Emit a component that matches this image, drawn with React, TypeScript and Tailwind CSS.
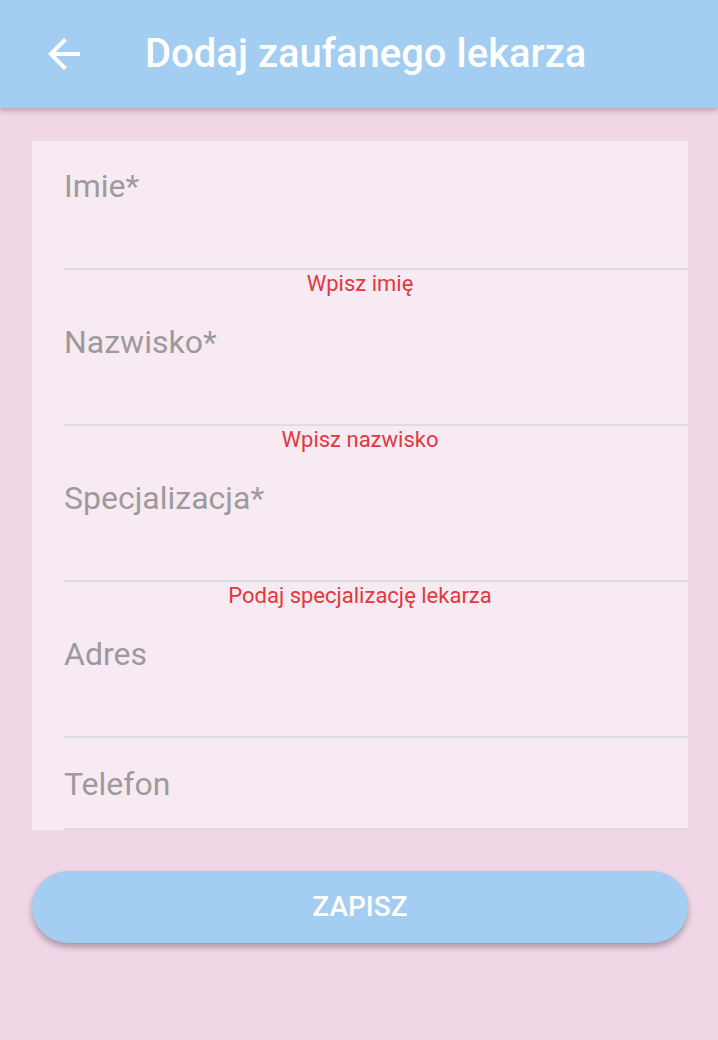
import React from "react";

const Field = ({ label, h, pt }: { label: string; h: string; pt: string }) => (
  <div className="pl-[32px]">
    <div className={`${h} ${pt} box-border border-b-2 border-[#dedcdd]`}>
      <div className="text-[32px] leading-[36px] text-[#9e9a9c]">{label}</div>
    </div>
  </div>
);

const ErrorRow = ({ text }: { text: string }) => (
  <div className="h-[28px] text-center text-[22px] leading-[28px] text-[#e0393e]">{text}</div>
);

export default function App() {
  return (
    <div
      className="w-[718px] h-[1040px] bg-[#f1d6e6] overflow-hidden"
      style={{ fontFamily: "Roboto, 'Noto Sans', sans-serif" }}
    >
      <div className="relative z-10 h-[108px] bg-[#a3cdf1] flex items-center shadow-[0_3px_5px_rgba(0,0,0,0.22)]">
        <div className="w-[48px] h-[48px] ml-[40px] flex items-center justify-center">
          <svg viewBox="0 0 24 24" width="48" height="48" fill="#ffffff">
            <path d="M20 11H7.83l5.59-5.59L12 4l-8 8 8 8 1.41-1.41L7.83 13H20v-2z" />
          </svg>
        </div>
        <div className="ml-[57px] text-[40px] leading-[48px] font-medium text-white">
          Dodaj zaufanego lekarza
        </div>
      </div>

      <div className="ml-[32px] mr-[30px] mt-[33px] h-[689px] overflow-hidden bg-[#f7eaf3]">
        <Field label="Imie*" h="h-[129px]" pt="pt-[27px]" />
        <ErrorRow text="Wpisz imię" />
        <Field label="Nazwisko*" h="h-[128px]" pt="pt-[26px]" />
        <ErrorRow text="Wpisz nazwisko" />
        <Field label="Specjalizacja*" h="h-[128px]" pt="pt-[26px]" />
        <ErrorRow text="Podaj specjalizację lekarza" />
        <Field label="Adres" h="h-[128px]" pt="pt-[26px]" />
        <Field label="Telefon" h="h-[92px]" pt="pt-[28px]" />
      </div>

      <div className="ml-[32px] mr-[30px] mt-[41px] h-[72px] rounded-full bg-[#a3cdf1] flex items-center justify-center shadow-[0_4px_6px_rgba(0,0,0,0.3)]">
        <span className="text-[28px] font-medium text-white">ZAPISZ</span>
      </div>
    </div>
  );
}
